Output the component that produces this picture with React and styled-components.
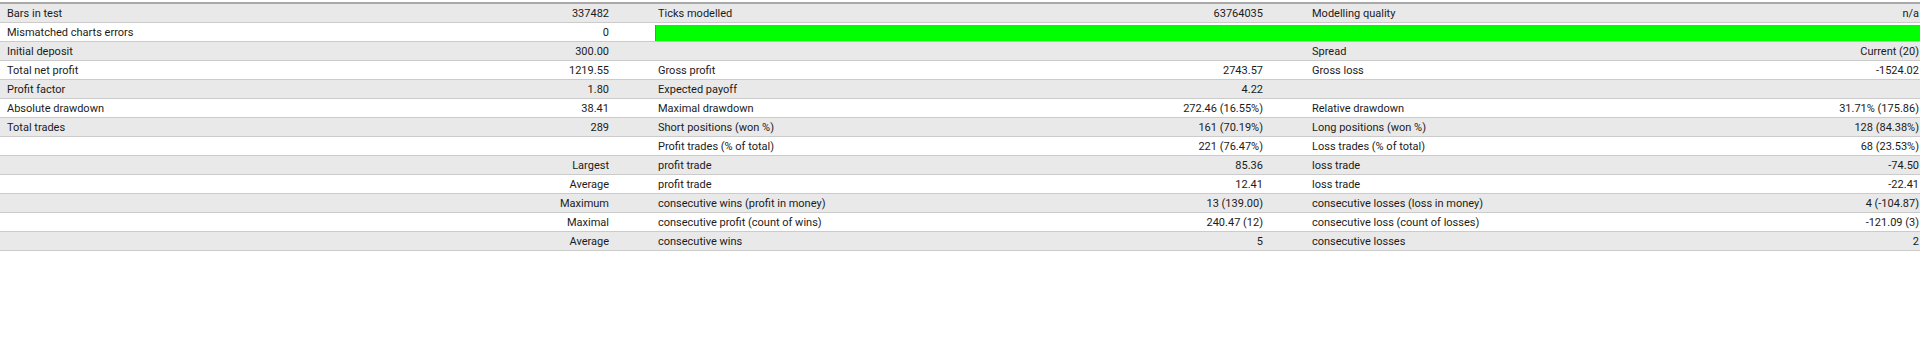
import React from 'react'
import styled, { createGlobalStyle } from 'styled-components'

const Global = createGlobalStyle`
  body {
    margin: 0;
    background: #ffffff;
    font-family: "Roboto", "Liberation Sans", sans-serif;
  }
`

const Report = styled.div`
  padding-top: 2px;
  width: 1920px;
`

const Table = styled.div`
  border-top: 2px solid #a8a8a8;
  display: flex;
  flex-direction: column;
`

const Row = styled.div`
  display: grid;
  grid-template-columns: 400px 255px 345px 309px 291px 320px;
  height: 18px;
  border-bottom: 1px solid #cbcbcb;
  background: ${p => (p.$shade ? '#e9e9e9' : '#ffffff')};
  font-size: 11px;
  color: #1b1b1b;
  line-height: 18px;
`

const Label = styled.div`
  padding-left: ${p => (p.$first ? '7px' : '3px')};
  padding-top: 1px;
  white-space: nowrap;
  overflow: hidden;
`

const Value = styled.div`
  text-align: right;
  padding-top: 1px;
  padding-right: ${p => (p.$last ? '1px' : '46px')};
  white-space: nowrap;
`

const BarCell = styled.div`
  grid-column: 3 / 7;
  display: flex;
  align-items: center;
`

const Bar = styled.div`
  flex: 1;
  height: 16px;
  background: #00ff00;
  border-left: 1px solid #5f7fb0;
`

const rows = [
  ['Bars in test', '337482', 'Ticks modelled', '63764035', 'Modelling quality', 'n/a'],
  ['Mismatched charts errors', '0', 'BAR'],
  ['Initial deposit', '300.00', '', '', 'Spread', 'Current (20)'],
  ['Total net profit', '1219.55', 'Gross profit', '2743.57', 'Gross loss', '-1524.02'],
  ['Profit factor', '1.80', 'Expected payoff', '4.22', '', ''],
  ['Absolute drawdown', '38.41', 'Maximal drawdown', '272.46 (16.55%)', 'Relative drawdown', '31.71% (175.86)'],
  ['Total trades', '289', 'Short positions (won %)', '161 (70.19%)', 'Long positions (won %)', '128 (84.38%)'],
  ['', '', 'Profit trades (% of total)', '221 (76.47%)', 'Loss trades (% of total)', '68 (23.53%)'],
  ['', 'Largest', 'profit trade', '85.36', 'loss trade', '-74.50'],
  ['', 'Average', 'profit trade', '12.41', 'loss trade', '-22.41'],
  ['', 'Maximum', 'consecutive wins (profit in money)', '13 (139.00)', 'consecutive losses (loss in money)', '4 (-104.87)'],
  ['', 'Maximal', 'consecutive profit (count of wins)', '240.47 (12)', 'consecutive loss (count of losses)', '-121.09 (3)'],
  ['', 'Average', 'consecutive wins', '5', 'consecutive losses', '2'],
]

export default function App() {
  return (
    <Report>
      <Global />
      <Table>
        {rows.map((r, i) => (
          <Row key={i} $shade={i % 2 === 0}>
            <Label $first>{r[0]}</Label>
            <Value>{r[1]}</Value>
            {r[2] === 'BAR' ? (
              <BarCell><Bar /></BarCell>
            ) : (
              <>
                <Label>{r[2]}</Label>
                <Value>{r[3]}</Value>
                <Label>{r[4]}</Label>
                <Value $last>{r[5]}</Value>
              </>
            )}
          </Row>
        ))}
      </Table>
    </Report>
  )
}
